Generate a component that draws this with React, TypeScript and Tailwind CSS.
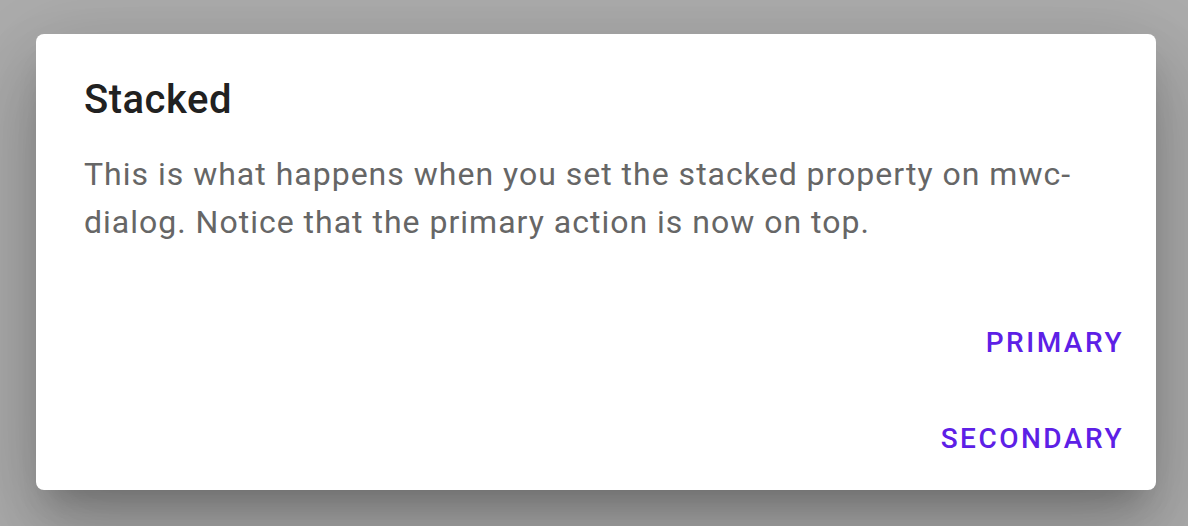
export default function App() {
  return (
    <div className="w-[1188px] h-[526px] bg-[#adadad] pt-[34px] pl-[36px] font-['Roboto',sans-serif] overflow-hidden">
      <div className="w-[1120px] h-[456px] bg-white rounded-[8px] flex flex-col shadow-[0_22px_30px_-14px_rgba(0,0,0,0.2),0_48px_76px_6px_rgba(0,0,0,0.14),0_18px_92px_16px_rgba(0,0,0,0.12)]">
        <h2 className="pt-[34px] px-[48px] text-[40px] leading-[64px] font-medium tracking-[0.5px] text-[#212121]">
          Stacked
        </h2>
        <div className="mt-[18px] px-[48px] pb-[40px] text-[32px] leading-[48px] tracking-[1px] text-[#666666]">
          This is what happens when you set the stacked property on mwc-dialog. Notice that the primary action is now on top.
        </div>
        <div className="flex flex-col items-end pt-[21px] px-[16px] gap-[24px]">
          <button className="h-[72px] px-[16px] text-[28px] font-medium uppercase tracking-[2.5px] text-[#5d20e6]">
            Primary
          </button>
          <button className="h-[72px] px-[16px] text-[28px] font-medium uppercase tracking-[2.5px] text-[#5d20e6]">
            Secondary
          </button>
        </div>
      </div>
    </div>
  );
}
